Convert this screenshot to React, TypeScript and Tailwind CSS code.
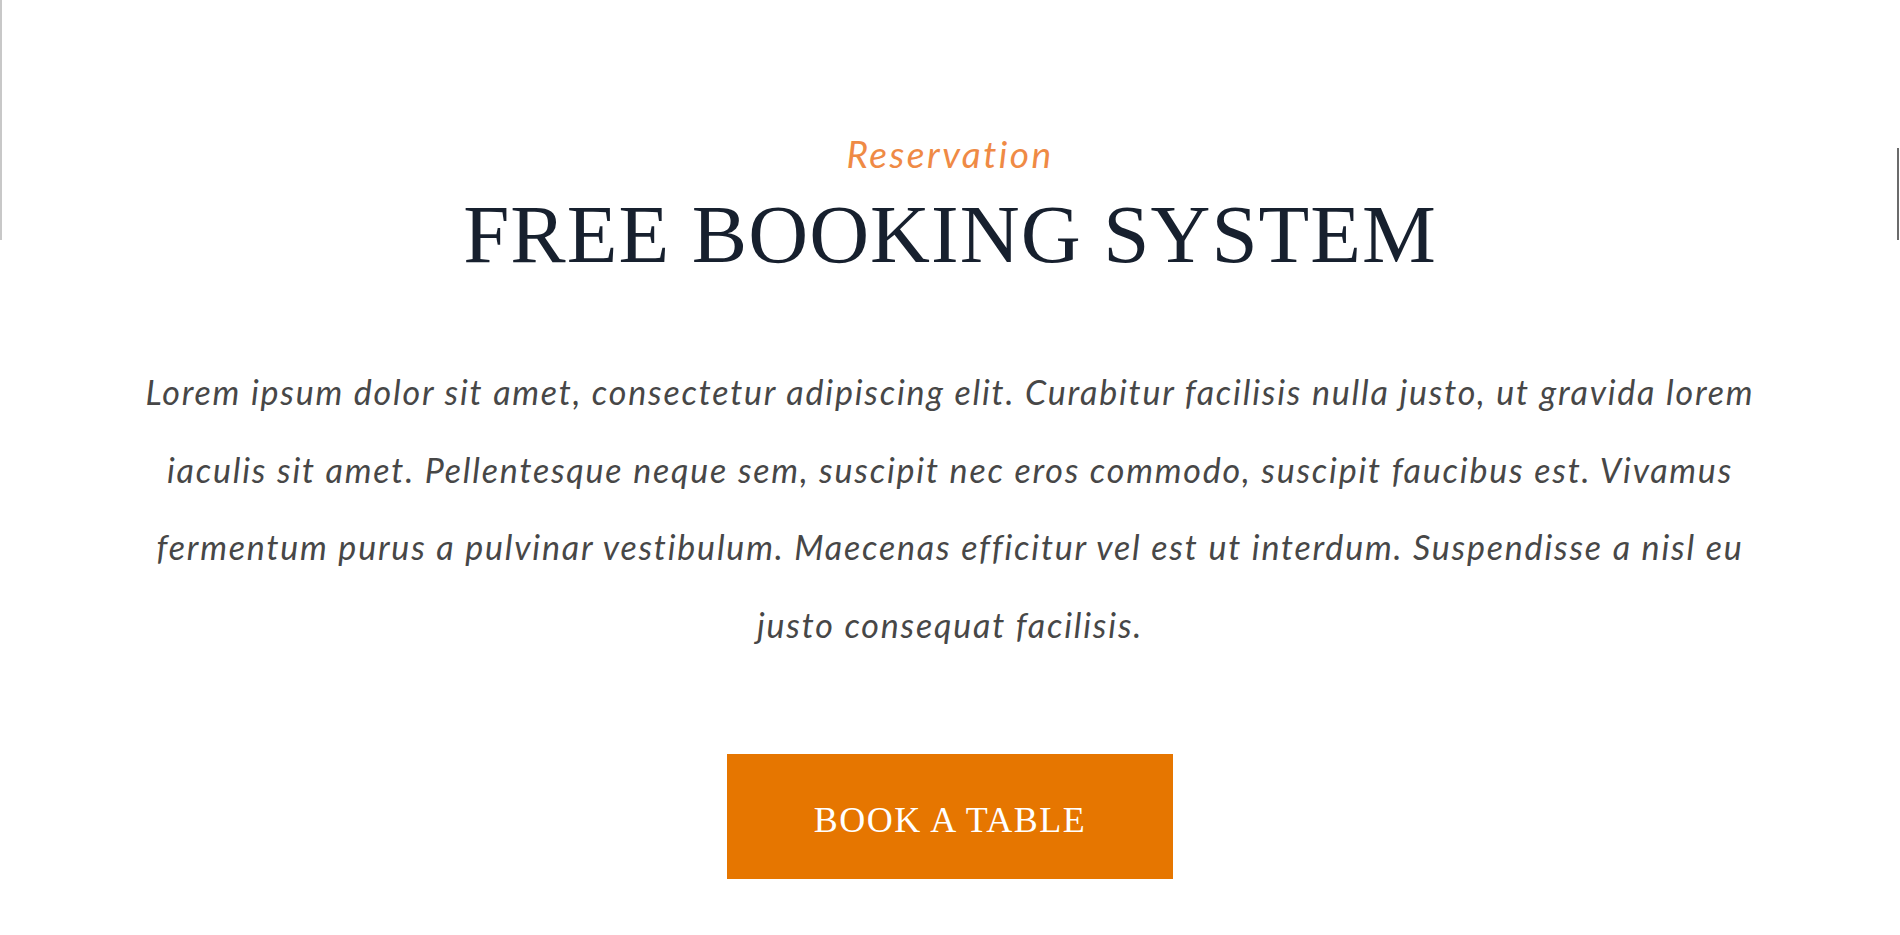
import React from "react";

export default function App() {
  return (
    <div className="relative w-full min-h-[935px] bg-white overflow-hidden">
      <div className="absolute left-0 top-0 w-[2px] h-[240px] bg-[#c8c8c8]" />
      <div className="absolute right-[1px] top-[148px] w-[2px] h-[92px] bg-[#6b6b6b]" />
      <div className="flex flex-col items-center pt-[135px]">
        <div
          className="text-[37px] leading-[37px] italic tracking-[2.5px] text-[#ef8a45]"
          style={{ fontFamily: "Lato, 'Open Sans', sans-serif" }}
        >
          Reservation
        </div>
        <h1
          className="mt-[21px] text-[83px] leading-[83px] font-normal tracking-[1px] text-[#17202e]"
          style={{ fontFamily: "'Liberation Serif', 'Times New Roman', serif" }}
        >
          FREE BOOKING SYSTEM
        </h1>
        <p
          className="mt-[77px] w-[1650px] text-center text-[34px] leading-[77.5px] italic tracking-[1.8px] text-[#474747]"
          style={{ fontFamily: "Lato, 'Open Sans', sans-serif" }}
        >
          Lorem ipsum dolor sit amet, consectetur adipiscing elit. Curabitur facilisis nulla justo, ut gravida lorem
          iaculis sit amet. Pellentesque neque sem, suscipit nec eros commodo, suscipit faucibus est. Vivamus
          fermentum purus a pulvinar vestibulum. Maecenas efficitur vel est ut interdum. Suspendisse a nisl eu
          justo consequat facilisis.
        </p>
        <button
          className="mt-[91px] w-[446px] h-[125px] flex items-center justify-center bg-[#e67600] text-white text-[36px] tracking-[1.5px] pt-[6px]"
          style={{ fontFamily: "'Liberation Serif', 'Times New Roman', serif" }}
        >
          BOOK A TABLE
        </button>
      </div>
    </div>
  );
}
